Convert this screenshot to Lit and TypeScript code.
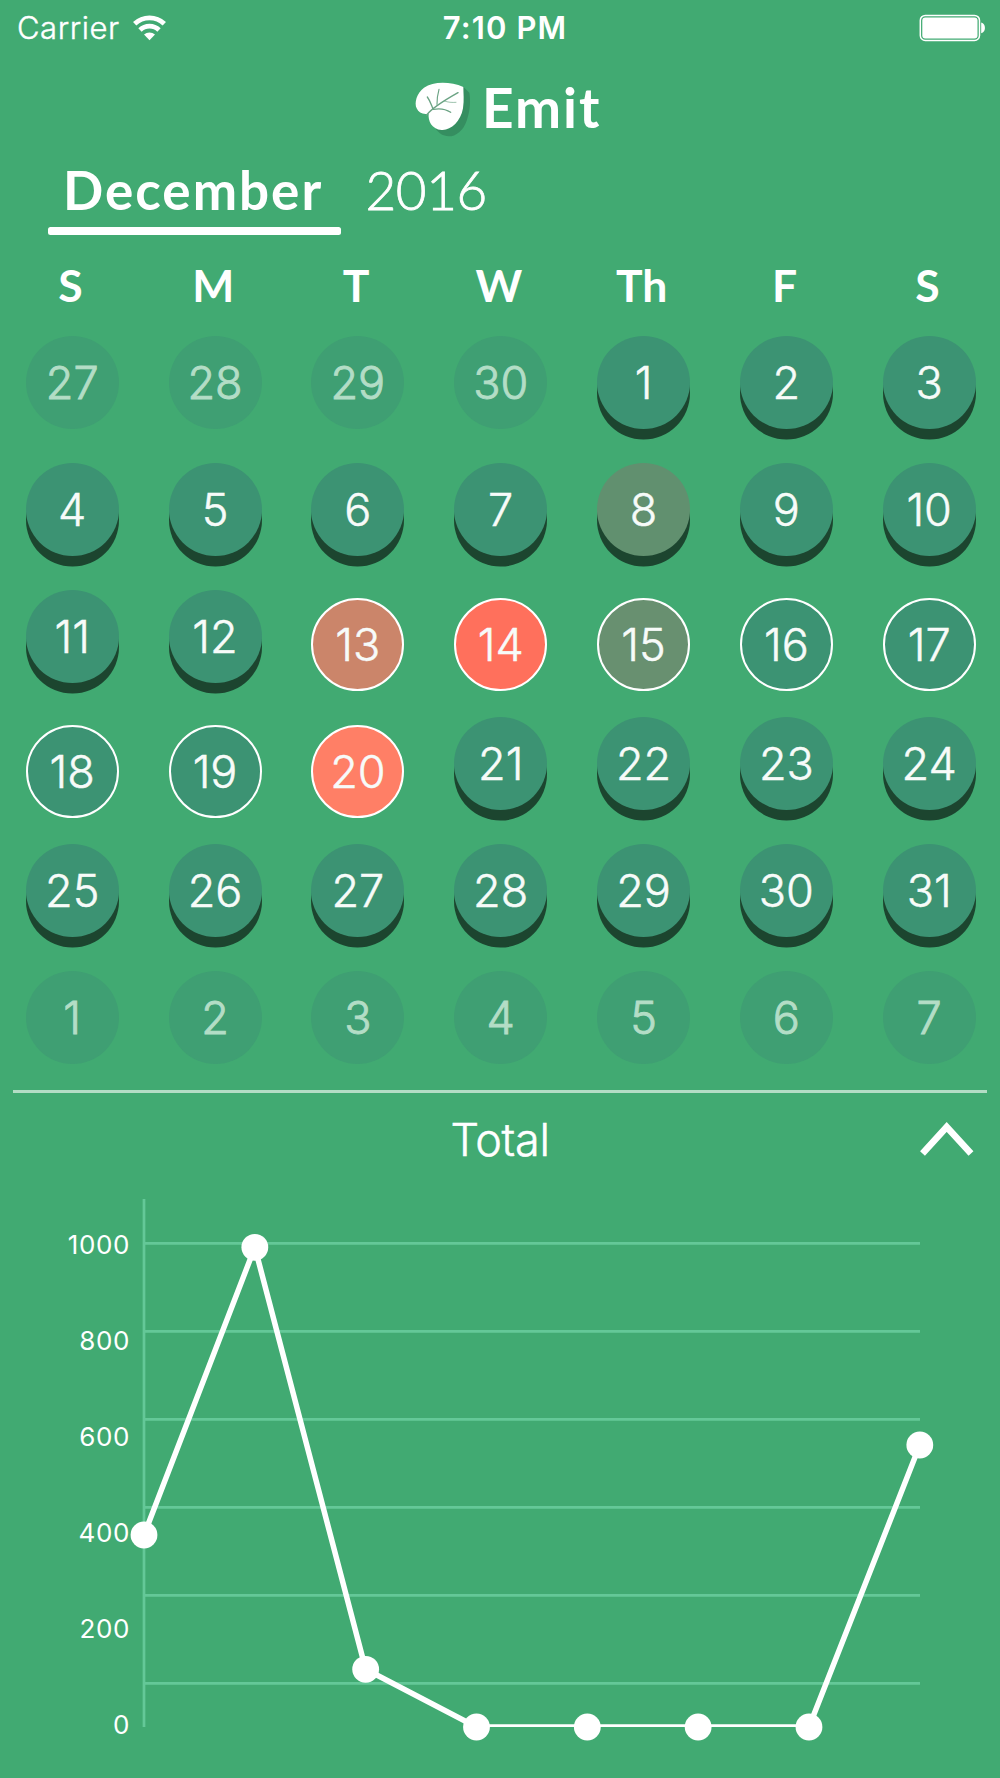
import { LitElement, html, svg, css } from "lit";
import { customElement, property } from "lit/decorators.js";
import { classMap } from "lit/directives/class-map.js";
import { styleMap } from "lit/directives/style-map.js";

type DayKind = "outside" | "raised" | "ring";

interface Day {
  label: number;
  kind: DayKind;
  color?: string;
}

const HEAT: Record<number, string> = {
  8: "#61906f",
  13: "#cb856a",
  14: "#ff705c",
  15: "#689070",
  20: "#ff7f66",
};

function buildDays(): Day[] {
  const days: Day[] = [];
  for (let d = 27; d <= 30; d++) days.push({ label: d, kind: "outside" });
  for (let d = 1; d <= 31; d++) {
    days.push({ label: d, kind: d >= 13 && d <= 20 ? "ring" : "raised", color: HEAT[d] });
  }
  for (let d = 1; d <= 7; d++) days.push({ label: d, kind: "outside" });
  return days;
}

@customElement("status-bar")
class StatusBar extends LitElement {
  static styles = css`
    :host {
      display: grid;
      grid-template-columns: 1fr auto 1fr;
      align-items: center;
      height: 54px;
      padding: 0 14px 0 17px;
      font: 300 31px/54px Inter, "Liberation Sans", sans-serif;
    }
    .left { display: flex; align-items: center; gap: 13.5px; }
    .carrier { letter-spacing: 0.55px; padding-top: 1px; -webkit-text-stroke: 0.4px #fff; }
    .time { font-weight: 600; letter-spacing: 1.1px; padding: 1px 0 0 7px; }
    .right { display: flex; justify-content: flex-end; }
    svg { display: block; }
  `;

  render() {
    return html`
      <div class="left">
        <span class="carrier">Carrier</span>
        <svg width="33" height="26" viewBox="0 0 33 26">
          <g fill="none" stroke="#fff" stroke-width="4.8">
            <path d="M1.7 8.8 A21.5 21.5 0 0 1 31.3 8.8" />
            <path d="M7 15 A13.6 13.6 0 0 1 26 15" />
          </g>
          <path d="M11 19.6 A8 8 0 0 1 22 19.6 L16.5 25.2 Z" fill="#fff" />
        </svg>
      </div>
      <span class="time">7:10 PM</span>
      <div class="right">
        <svg width="67" height="28" viewBox="0 0 67 28">
          <rect x="1.3" y="1.4" width="59.2" height="25" rx="5" fill="none" stroke="#fff" stroke-width="1.5" />
          <rect x="3.3" y="3.4" width="55.2" height="21" rx="3" fill="#fff" />
          <path d="M62.2 8.6 C67.2 9.6 67.2 18.2 62.2 19.2 Z" fill="#fff" />
        </svg>
      </div>
    `;
  }
}

@customElement("app-brand")
class AppBrand extends LitElement {
  static styles = css`
    :host {
      display: flex;
      align-items: center;
      height: 108px;
      padding-left: 413px;
      gap: 9px;
    }
    svg { display: block; margin-top: 3px; }
    .name { font: 700 55px/106px Lato, sans-serif; letter-spacing: 2px; margin-top: -2px; }
  `;

  render() {
    return html`
      <svg width="60" height="60" viewBox="39 240 180 180">
        <path
          d="M190 260 L208 278 C212 300 211 330 200 362 C190 392 168 409 146 409 C128 408 118 400 108 388 Z"
          fill="#358e60"
        />
        <path
          d="M190 261 C150 244 100 244 72 263 C50 280 42 308 50 325 C56 339 70 345 86 341 C84 362 94 387 125 390 C152 392 182 365 189 325 C193 300 190 280 190 261Z"
          fill="#fff"
        />
        <g fill="none" stroke="#6ba384" stroke-linecap="round">
          <path d="M80 345 C95 325 135 300 174 278" stroke-width="4.4" />
          <path d="M99 326 C93 312 90 302 82 291" stroke-width="4" />
          <path d="M111 313 C111 298 113 282 117 268" stroke-width="3.4" />
          <path d="M100 328 C120 324 137 327 152 337" stroke-width="3.8" />
          <path d="M133 303 C144 307 156 308 168 307" stroke-width="2" />
        </g>
      </svg>
      <span class="name">Emit</span>
    `;
  }
}

@customElement("day-cell")
class DayCell extends LitElement {
  @property({ attribute: false }) day!: Day;

  static styles = css`
    :host { display: flex; justify-content: center; }
    .disc {
      box-sizing: border-box;
      width: 93px;
      height: 93px;
      border-radius: 50%;
      background: #3c9373;
      font: 300 45px/94px Inter, "Liberation Sans", sans-serif;
      -webkit-text-stroke: 0.5px currentColor;
      text-align: center;
      color: #f7fbf9;
    }
    .outside { background: #3f9f73; color: #b3ddc6; -webkit-text-stroke-width: 0.9px; }
    .raised { box-shadow: 0 10.6px 0 #1c452f; }
    .ring { margin-top: 8.2px; border: 2.6px solid #fff; line-height: 90px; }
  `;

  render() {
    const { label, kind, color } = this.day;
    return html`<div
      class=${classMap({ disc: true, [kind]: true })}
      style=${styleMap(color ? { backgroundColor: color } : {})}
    >${label}</div>`;
  }
}

@customElement("month-calendar")
class MonthCalendar extends LitElement {
  private readonly weekdays = ["S", "M", "T", "W", "Th", "F", "S"];
  private readonly days = buildDays();

  static styles = css`
    :host { display: block; }
    .period { display: flex; height: 73px; padding-left: 48px; font: 53px/56px Lato, sans-serif; }
    .month {
      display: flex;
      flex-direction: column;
      justify-content: space-between;
      width: 293px;
      font-weight: 700;
      letter-spacing: 2px;
    }
    .month span { padding-left: 15px; }
    .month i { height: 8px; border-radius: 2.5px; background: #fff; }
    .year {
      padding-left: 24.5px;
      font-weight: 300;
      letter-spacing: -0.4px;
      -webkit-text-stroke: 0.8px #fff;
    }
    .weekdays {
      display: grid;
      grid-template-columns: repeat(7, 142.83px);
      height: 101px;
      font: 700 44.5px/100px Lato, sans-serif;
      text-align: center;
      margin-left: -1px;
    }
    .days {
      display: grid;
      grid-template-columns: repeat(7, 142.83px);
      grid-template-rows: repeat(6, 127.1px);
      margin-left: 0.8px;
    }
  `;

  render() {
    return html`
      <div class="period">
        <div class="month"><span>December</span><i></i></div>
        <div class="year">2016</div>
      </div>
      <div class="weekdays">${this.weekdays.map((d) => html`<span>${d}</span>`)}</div>
      <div class="days">${this.days.map((d) => html`<day-cell .day=${d}></day-cell>`)}</div>
    `;
  }
}

@customElement("total-chart")
class TotalChart extends LitElement {
  private readonly ticks = [1000, 800, 600, 400, 200, 0];
  private readonly ys = [336, 48.3, 470.3, 528, 528, 528, 528, 246];

  static styles = css`
    :host { display: flex; padding-top: 12px; }
    .labels {
      display: flex;
      flex-direction: column;
      width: 130px;
      font: 400 26px/96px Inter, "Liberation Sans", sans-serif;
      letter-spacing: 0.6px;
      text-align: right;
    }
    .labels span { height: 96px; }
    svg { display: block; overflow: visible; margin-top: 2px; }
  `;

  render() {
    const pts = this.ys.map((y, i) => [14 + i * 110.83, y] as const);
    return html`
      <div class="labels">${this.ticks.map((t) => html`<span>${t}</span>`)}</div>
      <svg width="804" height="560" viewBox="0 0 804 560">
        <defs><clipPath id="plot"><rect x="0" y="0" width="804" height="528" /></clipPath></defs>
        <g stroke="#64c898" stroke-width="2.7">
          <path d="M14 0V528" />
          ${[0, 1, 2, 3, 4, 5].map((i) => svg`<path d="M14 ${44.4 + i * 88}H790" />`)}
        </g>
        <polyline
          points=${pts.map((p) => p.join(",")).join(" ")}
          fill="none" stroke="#fff" stroke-width="5.5" stroke-linejoin="round" clip-path="url(#plot)"
        />
        ${pts.map(([x, y]) => svg`<circle cx=${x} cy=${y} r="13.4" fill="#fff" />`)}
      </svg>
    `;
  }
}

@customElement("app-root")
class AppRoot extends LitElement {
  static styles = css`
    :host {
      display: block;
      box-sizing: border-box;
      width: 1000px;
      height: 1778px;
      overflow: hidden;
      background: #41aa72;
      color: #fff;
    }
    .divider { height: 3px; margin: -9px 13.4px 0 13px; background: #b3ddc5; }
    .summary {
      display: grid;
      grid-template-columns: 1fr auto 1fr;
      align-items: center;
      height: 92px;
      padding: 0 26px;
      font: 300 45px/92px Inter, "Liberation Sans", sans-serif;
    }
    .title { grid-column: 2; letter-spacing: -0.3px; padding-top: 1px; -webkit-text-stroke: 0.5px #fff; }
    .chevron { justify-self: end; display: block; margin-top: 0; }
  `;

  render() {
    return html`
      <status-bar></status-bar>
      <app-brand></app-brand>
      <month-calendar></month-calendar>
      <div class="divider"></div>
      <div class="summary">
        <span class="title">Total</span>
        <svg class="chevron" width="54" height="34" viewBox="0 0 54 34">
          <path d="M2.5 31.5 L26.7 5 L51 31.5" fill="none" stroke="#fff" stroke-width="6.6" />
        </svg>
      </div>
      <total-chart></total-chart>
    `;
  }
}
